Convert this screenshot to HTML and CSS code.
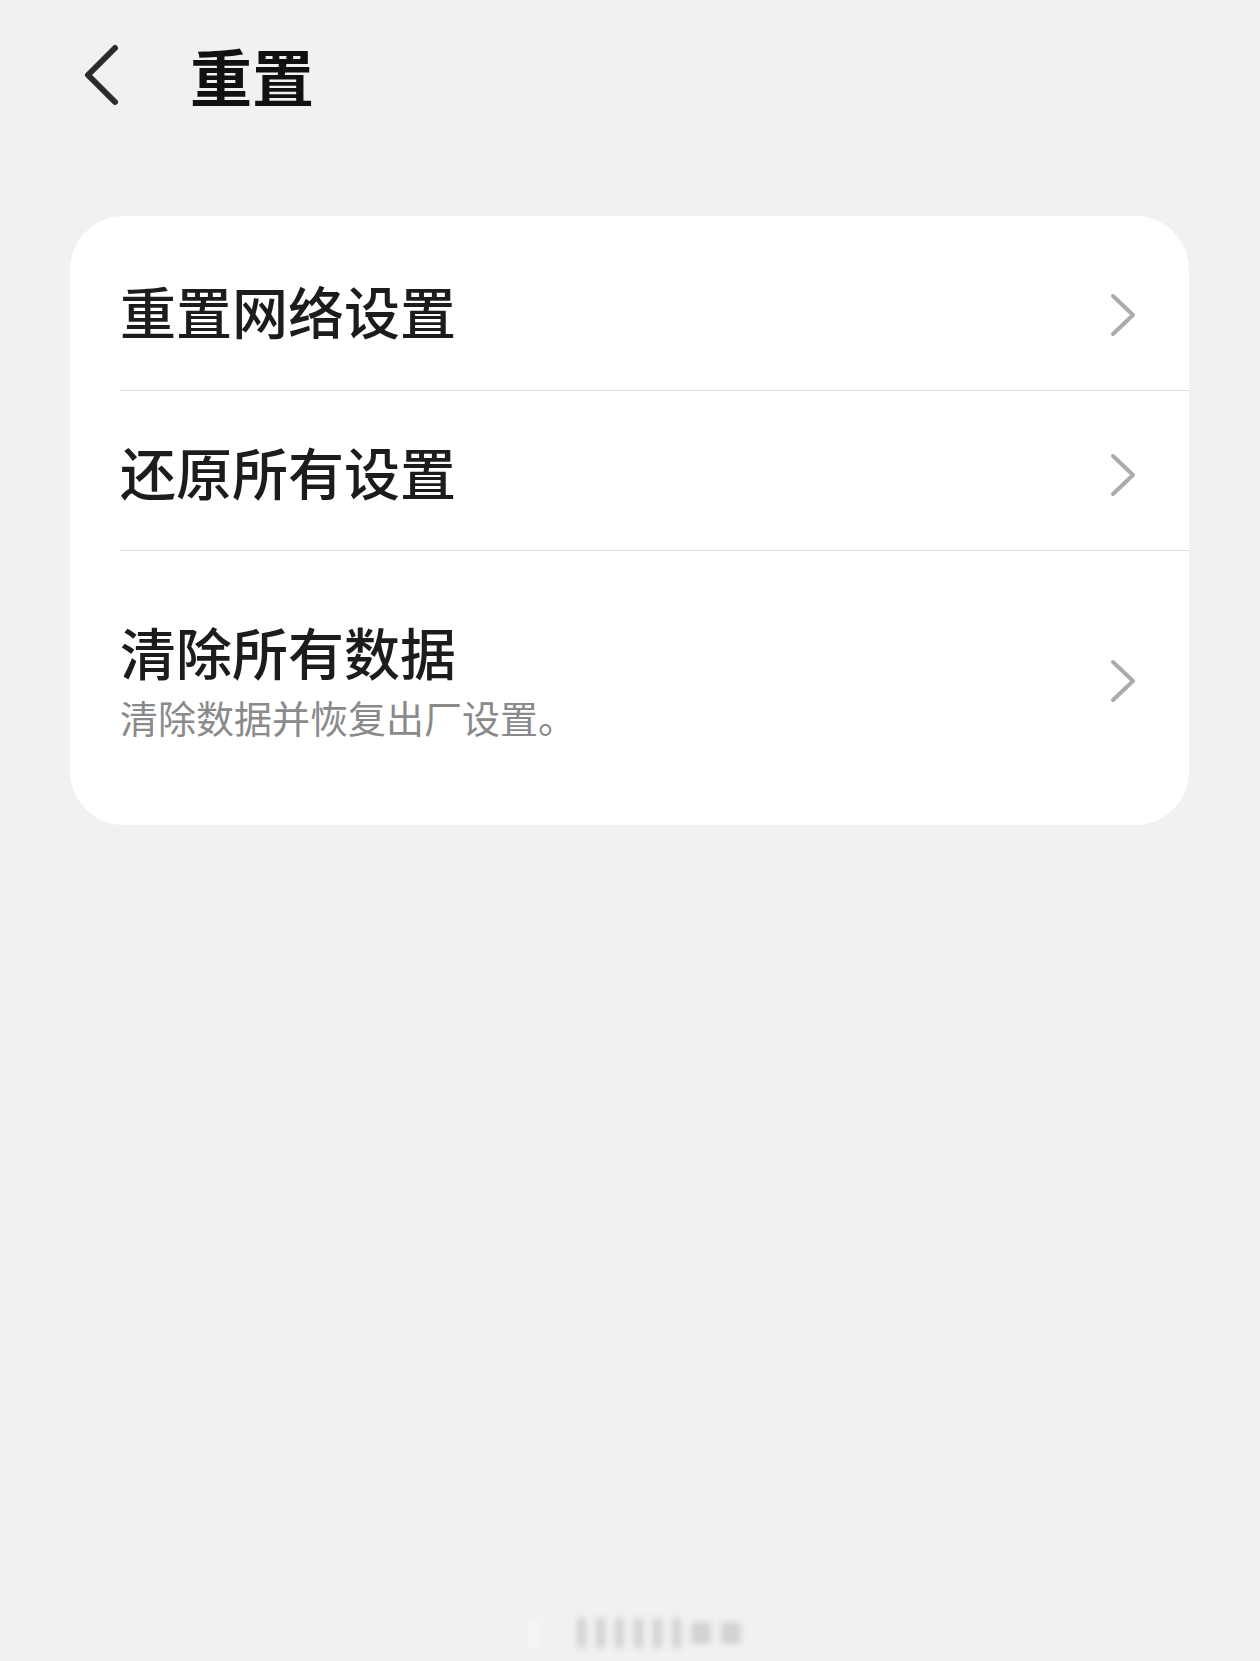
FILE: index.html
```html
<!DOCTYPE html>
<html lang="zh-CN">
<head>
    <meta charset="UTF-8">
    <meta name="viewport" content="width=device-width, initial-scale=1.0">
    <title>重置</title>
    <link rel="stylesheet" href="styles.css">
</head>
<body>
    <!-- Header -->
    <header class="header">
        <a href="#" class="back">
            <svg width="40" height="64" viewBox="0 0 40 64">
                <polyline points="35,5 8,32 35,59" fill="none" stroke="#2b2b2b" stroke-width="6" stroke-linecap="round" stroke-linejoin="round"/>
            </svg>
        </a>
        <h1 class="title">重置</h1>
    </header>

    <!-- Reset options -->
    <div class="card">
        <a href="#" class="row">
            <div class="row-text">
                <div class="row-title">重置网络设置</div>
            </div>
            <svg class="arrow" width="30" height="46" viewBox="0 0 30 46">
                <polyline points="5,4 25,23 5,42" fill="none" stroke="#ababab" stroke-width="4" stroke-linecap="round" stroke-linejoin="round"/>
            </svg>
        </a>
        <a href="#" class="row">
            <div class="row-text">
                <div class="row-title">还原所有设置</div>
            </div>
            <svg class="arrow" width="30" height="46" viewBox="0 0 30 46">
                <polyline points="5,4 25,23 5,42" fill="none" stroke="#ababab" stroke-width="4" stroke-linecap="round" stroke-linejoin="round"/>
            </svg>
        </a>
        <a href="#" class="row row-tall">
            <div class="row-text">
                <div class="row-title">清除所有数据</div>
                <div class="row-sub">清除数据并恢复出厂设置。</div>
            </div>
            <svg class="arrow" width="30" height="46" viewBox="0 0 30 46">
                <polyline points="5,4 25,23 5,42" fill="none" stroke="#ababab" stroke-width="4" stroke-linecap="round" stroke-linejoin="round"/>
            </svg>
        </a>
    </div>

    <!-- Faint watermark at the bottom -->
    <div class="watermark">
        <span></span><span></span><span></span><span></span><span></span><span></span><span></span><span></span><span></span>
    </div>
</body>
</html>
```

FILE: styles.css
```css
/* General Styles */
body {
    margin: 0;
    padding: 0;
    min-height: 1661px;
    background: #f1f1f3;
    font-family: "Noto Sans CJK SC", "Noto Sans", sans-serif;
    color: #1c1c1c;
    position: relative;
}

a {
    color: inherit;
    text-decoration: none;
}

/* Header */
.header {
    display: flex;
    align-items: center;
    height: 150px;
    padding-left: 80px;
}

.back {
    display: flex;
}

.title {
    margin: 0 0 0 70px;
    font-size: 62px;
    font-weight: 700;
    line-height: 1;
    color: #111;
}

/* Card */
.card {
    margin: 66px 71px 0 70px;
    padding: 14px 0;
    background: #ffffff;
    border-radius: 54px;
}

.row {
    display: flex;
    align-items: center;
    min-height: 160px;
    margin-left: 50px;
    padding-right: 51px;
    box-sizing: border-box;
}

.row + .row {
    border-top: 1px solid #dedede;
}

.row-tall {
    padding-top: 64px;
    padding-bottom: 67px;
}

.row-text {
    flex: 1;
}

.row-title {
    font-size: 56px;
    font-weight: 500;
    line-height: 72px;
    color: #1c1c1c;
}

.row-sub {
    margin-top: 3px;
    font-size: 38px;
    line-height: 54px;
    color: #8a8a8a;
}

.arrow {
    flex-shrink: 0;
    margin-top: 9px;
}

.row-tall .arrow {
    margin-top: 2px;
}

/* Watermark */
.watermark {
    position: absolute;
    left: 528px;
    top: 1618px;
    display: flex;
    gap: 10px;
    filter: blur(3px);
    opacity: 0.35;
}

.watermark span {
    display: block;
    width: 9px;
    height: 30px;
    background: #9a9a9a;
}

.watermark span:first-child {
    background: #ffffff;
    margin-right: 30px;
}

.watermark span:nth-child(n+8) {
    width: 20px;
    height: 22px;
    margin-top: 4px;
}
```
